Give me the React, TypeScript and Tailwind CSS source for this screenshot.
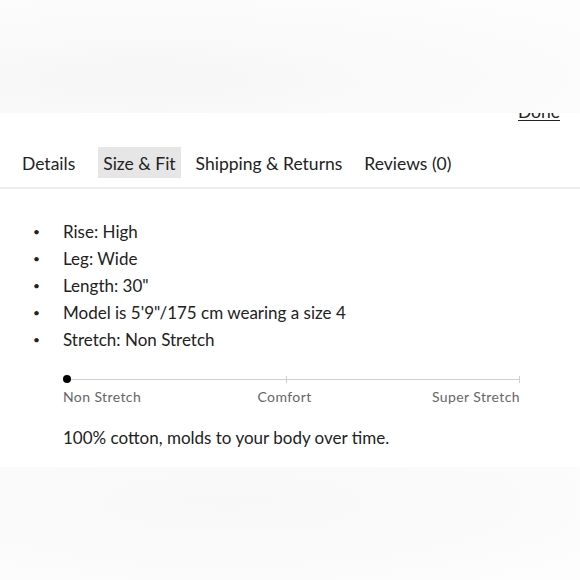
import React from "react";

export default function App() {
  const items = [
    "Rise: High",
    "Leg: Wide",
    'Length: 30"',
    'Model is 5\'9"/175 cm wearing a size 4',
    "Stretch: Non Stretch",
  ];
  return (
    <div className="w-[580px] h-[580px] overflow-hidden bg-white text-[#222] font-['Lato',sans-serif]">
      <div className="relative h-[113px] bg-[radial-gradient(ellipse_at_25%_70%,#f6f6f6_0%,#fafafa_45%,#fdfdfd_100%)]">
      </div>
      <div className="relative h-[354px] bg-white">
        <div className="absolute right-[20px] top-0 h-[9px] overflow-hidden">
          <span className="text-[17.5px] leading-[20px] underline underline-offset-[2px] block mt-[-11px]">Done</span>
        </div>
        <div className="pt-[34px]">
          <div className="flex items-center h-[31px] pl-[22px] text-[17.5px] leading-[22px] pt-[2px]">
            <span className="mr-[23px]">Details</span>
            <span className="bg-[#e6e6e6] h-[31px] mt-[-2px] pt-[2px] flex items-center px-[5px] mr-[15px]">Size &amp; Fit</span>
            <span className="mr-[22px]">Shipping &amp; Returns</span>
            <span>Reviews (0)</span>
          </div>
          <div className="mt-[9px] h-[2px] bg-[#ececec]" />
        </div>
        <ul className="mt-[33px] flex flex-col gap-[7px] text-[17px] leading-[20px]">
          {items.map((t) => (
            <li key={t} className="flex items-center">
              <span className="w-[63px] pl-[33px] text-[12px]">•</span>
              <span>{t}</span>
            </li>
          ))}
        </ul>
        <div className="ml-[63px] w-[457px] mt-[25px]">
          <div className="relative h-[8px] flex items-center">
            <div className="absolute left-[3px] right-0 h-px bg-[#cfcfcf]" />
            <div className="absolute left-0 w-[8px] h-[8px] rounded-full bg-black" />
            <div className="absolute left-[223px] w-px h-[7px] bg-[#cfcfcf]" />
            <div className="absolute right-0 w-px h-[7px] bg-[#cfcfcf]" />
          </div>
          <div className="flex justify-between mt-[3px] text-[14px] tracking-[0.4px] text-[#666]">
            <span>Non Stretch</span>
            <span className="mr-[4px]">Comfort</span>
            <span>Super Stretch</span>
          </div>
        </div>
        <p className="ml-[63px] mt-[18px] text-[17px]">100% cotton, molds to your body over time.</p>
      </div>
      <div className="h-[113px] bg-[radial-gradient(ellipse_at_40%_30%,#f8f8f8_0%,#fafafa_50%,#fdfdfd_100%)]" />
    </div>
  );
}
